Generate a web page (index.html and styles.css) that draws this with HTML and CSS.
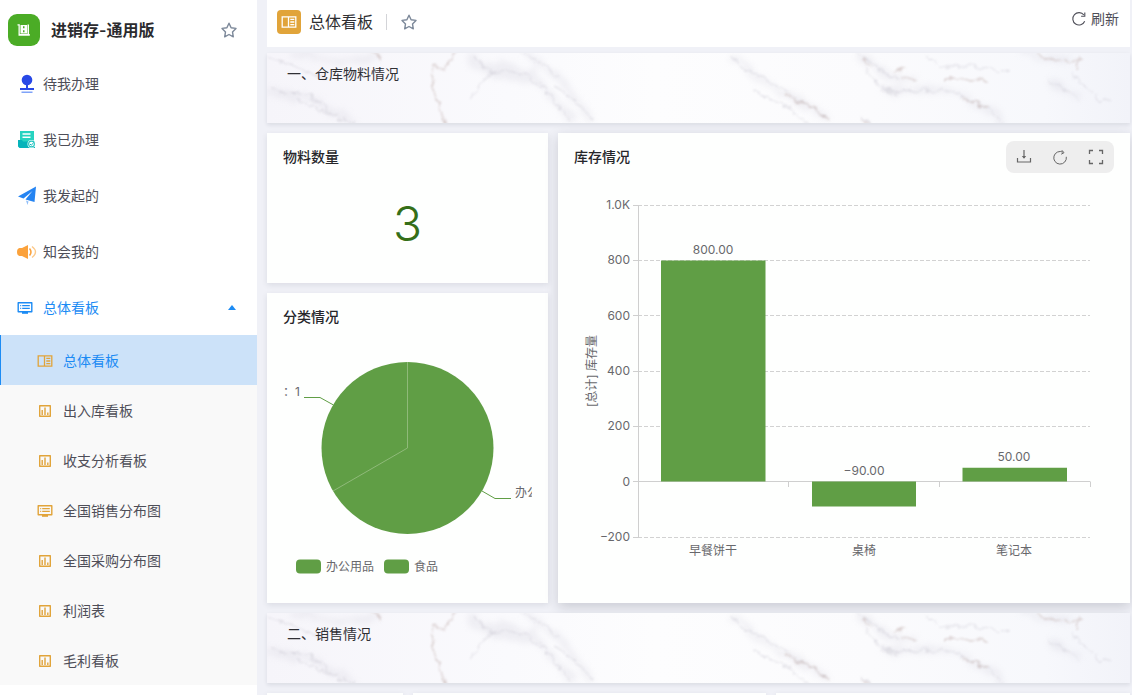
FILE: index.html
```html
<!DOCTYPE html>
<html lang="zh-CN">
<head>
<meta charset="utf-8">
<meta name="viewport" content="width=device-width, initial-scale=1">
<title>进销存-通用版</title>
<link rel="stylesheet" href="styles.css">
</head>
<body>
<svg class="sprite" aria-hidden="true">
  <symbol id="i-star" viewBox="0 0 16 16"><path d="M8 1.200l2.100 4.500 4.900.7-3.500 3.500.8 4.900L8 12.500l-4.300 2.300.8-4.900L1 6.400l4.900-.7z" fill="none" stroke="#7c8899" stroke-width="1.400" stroke-linejoin="round"/></symbol>
  <symbol id="i-split" viewBox="0 0 16 12"><path d="M1.200.8h13.600v10.400H1.200zM7.500.8v10.400M9.300 3.400h4M9.300 6h4M9.300 8.600h4" fill="none" stroke="currentColor" stroke-width="1.300"/></symbol>
  <symbol id="i-bars" viewBox="0 0 14 14"><path d="M1.700 1.700h10.600v10.600H1.700z" fill="none" stroke="currentColor" stroke-width="1.400" stroke-linejoin="round"/><path d="M4.200 6v5M7 3.500V11M9.800 8.500V11" fill="none" stroke="currentColor" stroke-width="1.400"/></symbol>
  <symbol id="i-screen" viewBox="0 0 16 14"><path d="M1.200 1.700h13.600v9H1.200z" fill="none" stroke="currentColor" stroke-width="1.400" stroke-linejoin="round"/><path d="M3.200 4.700h1M3.200 7.400h1M5.200 4.700h7.600M5.200 7.400h7.600" stroke="currentColor" stroke-width="1.300"/><path d="M5 11h6v1.800H5z" fill="currentColor"/></symbol>
  <symbol id="i-refresh" viewBox="0 0 16 16"><path d="M13.700 10.300A6.200 6.200 0 1 1 12.900 4" fill="none" stroke="currentColor" stroke-width="1.100"/><path d="M13.800 1.500v3.700h-3.700" fill="none" stroke="currentColor" stroke-width="1.100"/></symbol>
  <symbol id="marble" viewBox="0 0 863 70" preserveAspectRatio="none">
    <defs>
      <linearGradient id="stone"><stop offset="0" stop-color="#f6f5fa"/><stop offset=".28" stop-color="#fafafd"/><stop offset=".45" stop-color="#fdfdfe"/><stop offset=".7" stop-color="#fbfbfd"/><stop offset=".9" stop-color="#f7f8fc"/><stop offset="1" stop-color="#f2f3f9"/></linearGradient>
      <filter id="rough" x="-5%" y="-20%" width="110%" height="140%" color-interpolation-filters="sRGB"><feTurbulence type="fractalNoise" baseFrequency=".11" numOctaves="3" seed="4" result="n"/><feDisplacementMap in="SourceGraphic" in2="n" scale="10" xChannelSelector="R" yChannelSelector="G"/><feGaussianBlur stdDeviation=".8"/></filter>
      <filter id="haze" x="-5%" y="-30%" width="110%" height="160%" color-interpolation-filters="sRGB"><feTurbulence type="fractalNoise" baseFrequency=".06" numOctaves="3" seed="9" result="n"/><feDisplacementMap in="SourceGraphic" in2="n" scale="16" xChannelSelector="R" yChannelSelector="G"/><feGaussianBlur stdDeviation="3"/></filter>
    </defs>
    <rect width="863" height="70" fill="url(#stone)"/>
    <g fill="none" stroke="#dcdbe4" stroke-width="6" opacity=".4" filter="url(#haze)">
      <path d="M26 0L62 8 110 6M0 40L43 44 86 70M206 4L223 19 266 25 286 44 306 70M255 0L293 26 325 68M463 5L510 36 560 66M590 0L626 26 650 26M616 36L673 37 700 45 738 70M756 0L806 9M780 27L812 45"/>
      <path d="M205 10L240 18 270 20" stroke-width="10"/>
    </g>
    <g fill="none" stroke="#cbc9d3" stroke-width="1" opacity=".65" filter="url(#rough)">
      <path d="M3 4L30 14 60 27M4 36L43 43 60 57 88 71M30 45L62 60 80 71M206 4L223 19 240 17 266 27 286 44 293 57 308 71M253 0L273 10 293 24M222 20L205 46M286 32L310 48 326 68M463 4L483 19 510 32 533 47 562 67M486 35L500 44 520 55 542 71"/>
      <path d="M588 0L613 17 630 25M598 15L614 34 630 42M660 2L672 14 710 14 743 19M612 38L673 37 696 45 720 55 736 70M780 27L796 34 812 46M806 18L812 30 823 37 833 47 846 48M593 62L602 71"/>
    </g>
    <g fill="none" stroke="#cdbfbe" stroke-width="1.500" opacity=".75" filter="url(#rough)">
      <path d="M188 0L176 16 167 14 166 37 173 57 182 71M106 -2L114 7M518 42L542 52 562 68M594 5L604 15M627 19L638 15M635 24L652 27M674 26L693 26 721 28M694 46L722 55M768 2L796 8 816 7M812 4L810 18M595 66L600 71"/>
    </g>
  </symbol>
</svg>

<div class="app">
  <aside class="sidebar">
    <div class="brand">
      <svg class="brand-logo" viewBox="0 0 32 32" aria-hidden="true"><rect width="32" height="32" rx="9" fill="#4bac26"/><path d="M9.500 10.300h2.300V20h10v1.800H10.500V11.500h-1zM12.500 11H19v8.500h-6.500zM19.500 10.500H21V20h-1.500z" fill="#fff"/><path d="M15 12.300h1.500v2H15zM15 16.300h1.500v2H15z" fill="#4bac26"/></svg>
      <h1 class="brand-name">进销存-通用版</h1>
      <button class="icon-button" type="button" aria-label="收藏应用"><svg class="icon-16"><use href="#i-star"/></svg></button>
    </div>
    <nav class="menu">
      <a class="menu-item" href="#todo"><svg class="menu-icon" viewBox="0 0 20 20"><circle cx="10" cy="6" r="5.300" fill="#2848e6"/><path d="M9 10h2v4h6v2H3v-2h6z" fill="#2848e6"/><path d="M4.500 17.500h11v1.500h-11z" fill="#7fa3f8"/></svg>待我办理</a>
      <a class="menu-item" href="#done"><svg class="menu-icon" viewBox="0 0 20 20"><path d="M3 1h14v12H3z" fill="#27d3c0"/><path d="M5.500 4h8M5.500 7.200h8" stroke="#fff" stroke-width="1.400"/><path d="M1 10h4l1 1.500h12V18H2.500L1 16.500z" fill="#06b3ba"/><circle cx="14.500" cy="14" r="4" fill="#fff"/><circle cx="14.500" cy="14" r="2.900" fill="none" stroke="#27c7c0" stroke-width="1.100"/><path d="M13 14l1.200 1.200 2.400-2.400" fill="none" stroke="#06b3ba"/></svg>我已办理</a>
      <a class="menu-item" href="#started"><svg class="menu-icon" viewBox="0 0 20 20"><path d="M19 .5L1 10.500l5.500 2L15.500 5 8.500 13.500l9 2.500z" fill="#2584f2"/><path d="M9 14.500l2.500 1-1 3.500z" fill="#8fbef9"/></svg>我发起的</a>
      <a class="menu-item" href="#notice"><svg class="menu-icon" viewBox="0 0 20 20"><path d="M11 3v14l-6-3H2.500Q0 13.500 0 10T2.500 6H5z" fill="#fba23c"/><path d="M12.500 6.500q3 3.500 0 7" fill="none" stroke="#fba23c" stroke-width="1.500"/><path d="M15 4.500q7 5.500 0 11" fill="none" stroke="#fcc98a" stroke-width="1.400"/></svg>知会我的</a>
      <button class="menu-item menu-group" type="button" aria-expanded="true"><svg class="icon-screen"><use href="#i-screen"/></svg><span>总体看板</span><i class="caret"></i></button>
      <div class="submenu">
        <a class="sub-item active" href="#overview"><svg class="sub-icon"><use href="#i-split"/></svg>总体看板</a>
        <a class="sub-item" href="#stock"><svg class="sub-icon"><use href="#i-bars"/></svg>出入库看板</a>
        <a class="sub-item" href="#income"><svg class="sub-icon"><use href="#i-bars"/></svg>收支分析看板</a>
        <a class="sub-item" href="#sales-map"><svg class="sub-icon"><use href="#i-screen"/></svg>全国销售分布图</a>
        <a class="sub-item" href="#purchase-map"><svg class="sub-icon"><use href="#i-bars"/></svg>全国采购分布图</a>
        <a class="sub-item" href="#profit"><svg class="sub-icon"><use href="#i-bars"/></svg>利润表</a>
        <a class="sub-item" href="#gross"><svg class="sub-icon"><use href="#i-bars"/></svg>毛利看板</a>
      </div>
    </nav>
  </aside>

  <main class="main">
    <header class="topbar">
      <span class="page-badge"><svg class="badge-icon"><use href="#i-split"/></svg></span>
      <h2 class="page-title">总体看板</h2>
      <span class="divider"></span>
      <button class="icon-button" type="button" aria-label="收藏看板"><svg class="icon-16"><use href="#i-star"/></svg></button>
      <button class="refresh" type="button"><svg class="icon-16"><use href="#i-refresh"/></svg>刷新</button>
    </header>

    <div class="board">
      <section class="banner"><svg class="marble"><use href="#marble"/></svg><h3 class="banner-title">一、仓库物料情况</h3></section>

      <section class="card count-card">
        <h3 class="card-title">物料数量</h3>
        <p class="count">3</p>
      </section>

      <section class="card pie-card">
        <h3 class="card-title">分类情况</h3>
        <svg class="chart" viewBox="0 0 249 254" role="img" aria-label="分类情况饼图">
          <circle cx="124.500" cy="115" r="86" fill="#609e45"/>
          <path d="M124.500 29v86L50 158" fill="none" stroke="#8fba79" stroke-width="1"/>
          <path d="M50.500 72L37 64.500H21M199 158l13 7.500h16" fill="none" stroke="#609e45"/>
          <g class="chart-text">
            <text x="0" y="63">：1</text>
            <text x="232" y="164">办公</text>
            <text x="43" y="238">办公用品</text>
            <text x="131" y="238">食品</text>
          </g>
          <rect x="13" y="226.500" width="25" height="14" rx="4" fill="#609e45"/>
          <rect x="101" y="226.500" width="25" height="14" rx="4" fill="#609e45"/>
        </svg>
      </section>

      <section class="card bar-card">
        <div class="card-head">
          <h3 class="card-title">库存情况</h3>
          <div class="tools">
            <button class="tool" type="button" aria-label="下载"><svg class="icon-16" viewBox="0 0 16 16"><path d="M8 1v8M1.500 9v4h13V9" fill="none" stroke="#666" stroke-width="1.200"/><path d="M5.800 7L8 9.800 10.200 7z" fill="#666"/></svg></button>
            <button class="tool" type="button" aria-label="刷新图表"><svg class="icon-16" viewBox="0 0 16 16"><path d="M14.300 7.800A6.300 6.300 0 1 1 11 3.200" fill="none" stroke="#666"/><path d="M9.800 1.200l2.200 2.500-2.800 1.500" fill="none" stroke="#666"/></svg></button>
            <button class="tool" type="button" aria-label="全屏"><svg class="icon-16" viewBox="0 0 16 16"><path d="M1.500 5V1.500H5M11 1.500h3.500V5M14.500 11v3.500H11M5 14.500H1.500V11" fill="none" stroke="#666" stroke-width="1.300"/></svg></button>
          </div>
        </div>
        <svg class="chart" viewBox="0 0 540 414" role="img" aria-label="库存情况柱状图">
          <path d="M64 32.500h452M64 87.500h452M64 142.500h452M64 198.500h452M64 253.500h452M64 364.500h452" fill="none" stroke="#d2d2d2" stroke-dasharray="4 2"/>
          <path d="M64.500 32v333M59 32.500h5M59 87.500h5M59 142.500h5M59 198.500h5M59 253.500h5M59 308.500h457.500M59 364.500h5M214.500 309v5M365.500 309v5M516.500 309v5" fill="none" stroke="#cfcfcf"/>
          <path d="M87 87.500h104.500v221H87zM238 308.500h104v25H238zM388.500 294.800H493v13.700H388.500z" fill="#609e45"/>
          <g class="chart-text" text-anchor="end">
            <text x="56" y="36">1.0K</text><text x="56" y="91">800</text><text x="56" y="147">600</text><text x="56" y="202">400</text><text x="56" y="257">200</text><text x="56" y="313">0</text><text x="56" y="368">−200</text>
          </g>
          <g class="chart-text" text-anchor="middle">
            <text x="139" y="81">800.00</text><text x="290" y="302">−90.00</text><text x="440" y="288">50.00</text>
            <text x="139" y="382">早餐饼干</text><text x="290" y="382">桌椅</text><text x="440" y="382">笔记本</text>
            <text transform="translate(22 198) rotate(-90)">[总计] 库存量</text>
          </g>
        </svg>
      </section>

      <section class="banner"><svg class="marble"><use href="#marble"/></svg><h3 class="banner-title">二、销售情况</h3></section>

      <div class="sales-row">
        <section class="card"></section>
        <section class="card"></section>
        <section class="card"></section>
      </div>
    </div>
  </main>
</div>
</body>
</html>
```
FILE: styles.css
```css
* { box-sizing: border-box; }
body {
  margin: 0;
  background: #f0f1f7;
  color: #4e4e58;
  font: 14px/20px Inter, "Noto Sans CJK SC", sans-serif;
}
h1, h2, h3, p { margin: 0; }
button {
  border: 0;
  padding: 0;
  background: none;
  color: inherit;
  font: inherit;
  cursor: pointer;
}
a { color: inherit; text-decoration: none; }
svg { display: block; flex: none; }
.sprite { position: absolute; width: 0; height: 0; }
.icon-16 { width: 16px; height: 16px; }

.app { display: flex; height: 100vh; overflow: hidden; }

.sidebar { flex: 0 0 257px; background: #fff; overflow: hidden; }
.brand {
  display: flex;
  align-items: center;
  height: 56px;
  padding: 4px 20px 0 8px;
}
.brand-logo { width: 32px; height: 32px; }
.brand-name {
  flex: 1;
  padding-left: 11px;
  color: #2b2b2e;
  font-size: 16px;
  font-weight: 600;
  line-height: 24px;
}
.menu-item {
  display: flex;
  align-items: center;
  gap: 6px;
  width: 100%;
  height: 56px;
  padding: 0 20px 0 17px;
}
.menu-icon { width: 20px; height: 20px; }
.menu-group { height: 55px; gap: 10px; color: #1c8bf4; text-align: left; }
.icon-screen { width: 16px; height: 14px; }
.caret {
  margin: 0 1px 0 auto;
  border: 4px solid transparent;
  border-top: 0;
  border-bottom: 5px solid #1c8bf4;
}
.submenu { background: #f9f9f9; }
.sub-item {
  display: flex;
  align-items: center;
  gap: 10px;
  height: 50px;
  padding: 2px 0 0 36px;
  border-left: 1px solid transparent;
}
.sub-item.active { border-color: #1c8bf4; background: #cce2f9; color: #1c8bf4; }
.sub-icon { width: 16px; height: 14px; color: #e1a43a; }

.main {
  flex: 1;
  min-width: 0;
  padding: 0 2px 0 10px;
  overflow: hidden;
}
.topbar {
  display: flex;
  align-items: center;
  height: 47px;
  padding: 0 11px 4px 10px;
  background: #fff;
}
.page-badge {
  display: grid;
  place-items: center;
  width: 24px;
  height: 24px;
  border-radius: 4px;
  background: #e1a43a;
  color: #fff;
}
.badge-icon { width: 16px; height: 12px; }
.page-title {
  padding-left: 8px;
  color: #2f2f33;
  font-size: 16px;
  font-weight: 400;
  line-height: 24px;
}
.divider { width: 1px; height: 16px; margin: 0 14px 0 13px; background: #d3d4d8; }
.refresh {
  display: flex;
  align-items: center;
  gap: 4px;
  margin-left: auto;
  padding-bottom: 6px;
}

.board {
  display: grid;
  grid-template-columns: repeat(3, minmax(0, 1fr));
  grid-template-rows: 70px 150px auto 70px 150px;
  gap: 10px;
  padding-top: 6px;
}
.banner {
  position: relative;
  grid-column: 1 / -1;
  padding: 11px 20px;
  box-shadow: 0 2px 4px rgba(30, 35, 60, .1);
}
.marble { position: absolute; inset: 0; width: 100%; height: 100%; }
.banner-title {
  position: relative;
  color: #303035;
  font-size: 14px;
  font-weight: 400;
}
.card {
  min-height: 150px;
  padding: 8px 16px 16px;
  background: #fefffe;
  box-shadow: 0 2px 6px rgba(30, 35, 60, .1);
}
.card-title {
  color: #26262a;
  font-size: 14px;
  font-weight: 500;
  line-height: 32px;
}
.count {
  padding-top: 19px;
  color: #356f18;
  font-size: 48px;
  font-weight: 300;
  line-height: 64px;
  text-align: center;
}
.bar-card {
  grid-column: 2 / -1;
  grid-row: 2 / 4;
  box-shadow: 0 4px 12px rgba(30, 35, 50, .18);
}
.card-head { display: flex; justify-content: space-between; }
.tools { display: flex; border-radius: 8px; background: #eeeeee; }
.tool { display: grid; place-items: center; width: 36px; height: 32px; }
.chart { width: 100%; height: auto; overflow: hidden; }
.chart-text { fill: #68686c; font-size: 12px; }
.sales-row {
  display: grid;
  grid-column: 1 / -1;
  grid-template-columns: 136fr 353fr 354fr;
  gap: 10px;
}
```
